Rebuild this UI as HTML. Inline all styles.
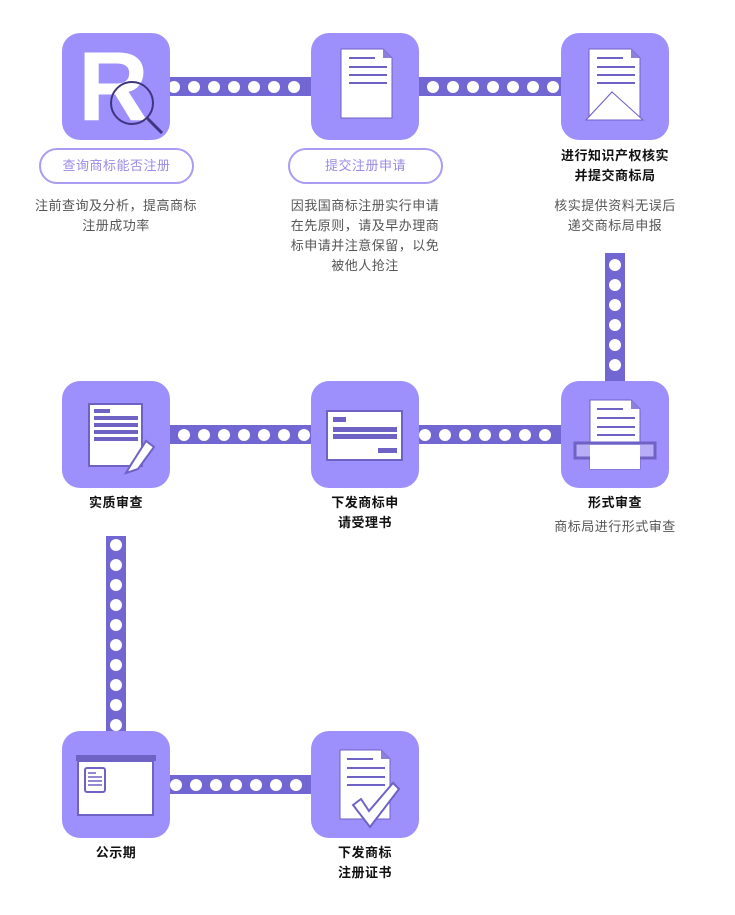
<!DOCTYPE html>
<html><head><meta charset="utf-8"><style>
body{margin:0;width:735px;height:915px;background:#fff;position:relative;overflow:hidden;font-family:"Liberation Sans","Noto Sans CJK SC",sans-serif}
.tile{position:absolute;width:108px;height:107px;background:#9d8ffc;border-radius:18px;overflow:hidden}
.tile svg{position:absolute;left:0;top:0}
.hb{position:absolute;height:19px;background:#7266d3}
.vb{position:absolute;width:20px;background:#7266d3}
.dot{position:absolute;width:12px;height:12px;border-radius:50%;background:#fff}
.pill{position:absolute;height:32px;border:2px solid #a99cf3;border-radius:18px;color:#9a8be6;font-size:13px;line-height:32px;text-align:center;letter-spacing:0.5px}
.t{position:absolute;text-align:center;font-size:13px;line-height:20px;letter-spacing:0.5px}
.g{color:#555}.b{font-weight:bold;color:#111}
.R{position:absolute;left:16px;top:4px;font:bold 98px/98px "Liberation Sans",sans-serif;color:#fff}
</style></head><body>
<div class="hb" style="left:168px;top:77px;width:146px"></div>
<div class="hb" style="left:417px;top:77px;width:146px"></div>
<div class="hb" style="left:168px;top:425px;width:146px"></div>
<div class="hb" style="left:417px;top:425px;width:146px"></div>
<div class="hb" style="left:168px;top:775px;width:146px"></div>
<div class="vb" style="left:605px;top:253px;height:130px"></div>
<div class="vb" style="left:106px;top:536px;height:197px"></div>
<div id="dots"></div>
<script>
var h='';function d(x,y){h+='<div class="dot" style="left:'+(x-6)+'px;top:'+(y-6)+'px"></div>';}
for(var i=0;i<7;i++){d(174+20*i,87);d(433+20*i,87);d(184+20*i,435);d(425+20*i,435);d(176+20*i,785);}
for(var i=0;i<6;i++)d(615,265+20*i);
for(var i=0;i<10;i++)d(116,545+20*i);
document.getElementById('dots').innerHTML=h;
</script>
<div class="tile" style="left:62px;top:33px"><div class="R">R</div><svg width="108" height="107">
<circle cx="70" cy="70" r="21" fill="none" stroke="#3f3580" stroke-width="2"/>
<line x1="85" y1="85" x2="100" y2="100" stroke="#3f3580" stroke-width="3"/></svg></div>
<div class="tile" style="left:311px;top:33px"><svg width="108" height="107">
<path d="M30 16H72L81 25V85H30Z" fill="#fff" stroke="#6e62c4" stroke-width="1"/><path d="M72 16V25H81" fill="#8c80dc"/>
<g stroke="#6e62c4" stroke-width="2"><line x1="38" y1="25" x2="64" y2="25"/><line x1="38" y1="34" x2="76" y2="34"/><line x1="38" y1="42" x2="76" y2="42"/><line x1="38" y1="50" x2="76" y2="50"/></g></svg></div>
<div class="tile" style="left:561px;top:33px"><svg width="108" height="107">
<path d="M28 16H70L79 25V87L51 59L25 87L28 84Z" fill="#fff" stroke="#6e62c4"/><path d="M70 16V25H79" fill="#8c80dc"/>
<path d="M25 87L51 59L82 87Z" fill="#fff" stroke="#6e62c4"/>
<g stroke="#6e62c4" stroke-width="2"><line x1="36" y1="25" x2="62" y2="25"/><line x1="36" y1="34" x2="74" y2="34"/><line x1="36" y1="42" x2="74" y2="42"/><line x1="36" y1="50" x2="74" y2="50"/></g></svg></div>
<div class="tile" style="left:62px;top:381px"><svg width="108" height="107">
<rect x="27" y="23" width="53" height="62" fill="#fff" stroke="#6e62c4" stroke-width="2"/>
<g fill="#6e62c4"><rect x="32" y="28" width="16" height="4"/><rect x="32" y="35" width="44" height="4"/><rect x="32" y="42" width="44" height="4"/><rect x="32" y="49" width="44" height="4"/><rect x="32" y="56" width="44" height="4"/></g>
<path d="M70 82L64 92L76 88L92 66L84 60Z" fill="#fff" stroke="#6e62c4" stroke-width="2"/><line x1="82" y1="64" x2="68" y2="84" stroke="#6e62c4"/></svg></div>
<div class="tile" style="left:311px;top:381px"><svg width="108" height="107">
<rect x="16" y="30" width="75" height="49" fill="#fff" stroke="#6e62c4" stroke-width="2"/>
<g fill="#6e62c4"><rect x="22" y="36" width="13" height="5"/><rect x="22" y="46" width="64" height="5"/><rect x="22" y="53" width="64" height="5"/><rect x="67" y="67" width="19" height="5"/></g></svg></div>
<div class="tile" style="left:561px;top:381px"><svg width="108" height="107">
<path d="M29 19H70L79 28V88H29Z" fill="#fff" stroke="#6e62c4"/><path d="M70 19V28H79" fill="#8c80dc"/>
<g stroke="#6e62c4" stroke-width="2"><line x1="36" y1="28" x2="62" y2="28"/><line x1="36" y1="37" x2="74" y2="37"/><line x1="36" y1="46" x2="74" y2="46"/><line x1="36" y1="54" x2="74" y2="54"/></g>
<rect x="14" y="62" width="80" height="15" fill="#b8aef8" stroke="#6e62c4" stroke-width="3"/>
<rect x="29" y="64" width="50" height="24" fill="#fff"/></svg></div>
<div class="tile" style="left:62px;top:731px"><svg width="108" height="107">
<rect x="14" y="24" width="80" height="6" fill="#6e62c4"/>
<rect x="16" y="30" width="75" height="54" fill="#fff" stroke="#6e62c4" stroke-width="2"/>
<rect x="23" y="37" width="20" height="24" rx="2" fill="#fff" stroke="#6e62c4" stroke-width="2"/>
<g stroke="#6e62c4" stroke-width="1.5"><line x1="26" y1="42" x2="34" y2="42"/><line x1="26" y1="46" x2="40" y2="46"/><line x1="26" y1="50" x2="40" y2="50"/><line x1="26" y1="54" x2="40" y2="54"/></g></svg></div>
<div class="tile" style="left:311px;top:731px"><svg width="108" height="107">
<path d="M29 19H70L79 28V88H29Z" fill="#fff" stroke="#6e62c4"/><path d="M70 19V28H79" fill="#8c80dc"/>
<g stroke="#6e62c4" stroke-width="2"><line x1="36" y1="28" x2="62" y2="28"/><line x1="36" y1="37" x2="74" y2="37"/><line x1="36" y1="46" x2="74" y2="46"/><line x1="36" y1="54" x2="74" y2="54"/></g>
<path d="M42 74L50 68L58 80L82 52L88 58L59 96Z" fill="#fff" stroke="#6e62c4" stroke-width="2"/></svg></div>

<div class="pill" style="left:39px;top:148px;width:151px">查询商标能否注册</div>
<div class="pill" style="left:288px;top:148px;width:151px">提交注册申请</div>
<div class="t g" style="left:16px;top:196px;width:200px">注前查询及分析，提高商标<br>注册成功率</div>
<div class="t g" style="left:265px;top:196px;width:200px">因我国商标注册实行申请<br>在先原则，请及早办理商<br>标申请并注意保留，以免<br>被他人抢注</div>
<div class="t b" style="left:515px;top:146px;width:200px">进行知识产权核实<br>并提交商标局</div>
<div class="t g" style="left:515px;top:196px;width:200px">核实提供资料无误后<br>递交商标局申报</div>
<div class="t b" style="left:16px;top:493px;width:200px">实质审查</div>
<div class="t b" style="left:265px;top:493px;width:200px">下发商标申<br>请受理书</div>
<div class="t b" style="left:515px;top:493px;width:200px">形式审查</div>
<div class="t g" style="left:515px;top:517px;width:200px">商标局进行形式审查</div>
<div class="t b" style="left:16px;top:843px;width:200px">公示期</div>
<div class="t b" style="left:265px;top:843px;width:200px">下发商标<br>注册证书</div>
</body></html>
